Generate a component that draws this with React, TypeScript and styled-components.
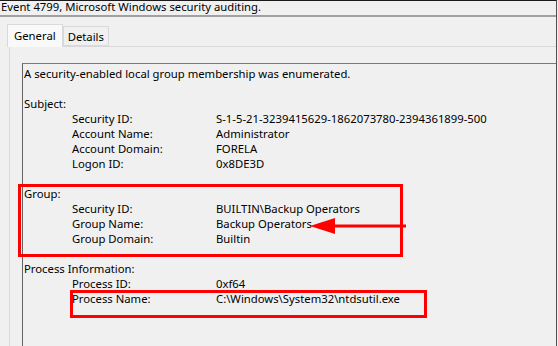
import React from 'react'
import styled, { createGlobalStyle } from 'styled-components'

const GlobalStyle = createGlobalStyle`
  html, body {
    margin: 0;
    padding: 0;
    background: #f0f0f0;
  }
  body {
    font-family: 'Noto Sans', 'Open Sans', sans-serif;
    font-size: 11.3px;
    color: #000;
  }
`

type Field = { label: string; value: string }
type Section = { title: string; fields: Field[] }

const sections: Section[] = [
  {
    title: 'Subject:',
    fields: [
      { label: 'Security ID:', value: 'S-1-5-21-3239415629-1862073780-2394361899-500' },
      { label: 'Account Name:', value: 'Administrator' },
      { label: 'Account Domain:', value: 'FORELA' },
      { label: 'Logon ID:', value: '0x8DE3D' },
    ],
  },
  {
    title: 'Group:',
    fields: [
      { label: 'Security ID:', value: 'BUILTIN\\Backup Operators' },
      { label: 'Group Name:', value: 'Backup Operators' },
      { label: 'Group Domain:', value: 'Builtin' },
    ],
  },
  {
    title: 'Process Information:',
    fields: [
      { label: 'Process ID:', value: '0xf64' },
      { label: 'Process Name:', value: 'C:\\Windows\\System32\\ntdsutil.exe' },
    ],
  },
]

const App: React.FC = () => {
  return (
    <>
      <GlobalStyle />
      <Window>
        <TitleBar>Event 4799, Microsoft Windows security auditing.</TitleBar>
        <Tabs>
          <Tab $active>General</Tab>
          <Tab>Details</Tab>
        </Tabs>
        <Panel>
          <TextBox>
            <Line>A security-enabled local group membership was enumerated.</Line>
            <Blank />
            {sections.map((s) => (
              <React.Fragment key={s.title}>
                <Line>{s.title}</Line>
                {s.fields.map((f) => (
                  <Row key={f.label}>
                    <Label>{f.label}</Label>
                    <Value>{f.value}</Value>
                  </Row>
                ))}
                <Blank />
              </React.Fragment>
            ))}
          </TextBox>
        </Panel>
        <Highlight style={{ left: 18, top: 183, width: 385, height: 73 }} />
        <Highlight style={{ left: 70, top: 289, width: 357, height: 28 }} />
        <Arrow width="100" height="20" viewBox="0 0 100 20">
          <line x1="20" y1="10" x2="96" y2="10" stroke="#ff0000" strokeWidth="3" />
          <polygon points="0,10 25,2 25,18" fill="#ff0000" />
        </Arrow>
      </Window>
    </>
  )
}

export default App

const Window = styled.div`
  position: relative;
  width: 556px;
  height: 345px;
  overflow: hidden;
  border-top: 1px solid #1a1a1a;
  border-right: 1px solid #505050;
  background: #f0f0f0;
`

const TitleBar = styled.div`
  height: 14px;
  line-height: 12px;
  padding-left: 1px;
  border-bottom: 2px solid #a0a0a0;
  white-space: nowrap;
`

const Tabs = styled.div`
  display: flex;
  align-items: flex-end;
  height: 22px;
  padding: 7px 0 0 7px;
`

const Tab = styled.div<{ $active?: boolean }>`
  display: flex;
  align-items: center;
  box-sizing: border-box;
  height: ${(p) => (p.$active ? '23px' : '20px')};
  margin-bottom: ${(p) => (p.$active ? '-1px' : '0')};
  padding: ${(p) => (p.$active ? '0 6px 2px 6px' : '0 4px')};
  border: 1px solid #d9d9d9;
  border-bottom: ${(p) => (p.$active ? 'none' : '1px solid #d9d9d9')};
  background: ${(p) => (p.$active ? '#f9f9f9' : '#f0f0f0')};
  position: relative;
  z-index: ${(p) => (p.$active ? 1 : 0)};
`

const Panel = styled.div`
  margin-left: 9px;
  padding: 16px 0 0 12px;
  border-top: 1px solid #d9d9d9;
  border-left: 1px solid #d9d9d9;
  height: 300px;
`

const TextBox = styled.div`
  border-top: 1px solid #7a7a7a;
  border-left: 1px solid #646464;
  padding: 2px 0 0 1px;
  height: 300px;
`

const Line = styled.div`
  height: 15px;
  line-height: 15px;
  white-space: nowrap;
`

const Blank = styled.div`
  height: 15px;
`

const Row = styled.div`
  display: grid;
  grid-template-columns: 144px 1fr;
  padding-left: 48px;
  height: 15px;
  line-height: 15px;
  white-space: nowrap;
`

const Label = styled.span``

const Value = styled.span``

const Highlight = styled.div`
  position: absolute;
  box-sizing: border-box;
  border: 3px solid #ff0000;
  pointer-events: none;
`

const Arrow = styled.svg`
  position: absolute;
  left: 310px;
  top: 215px;
`
